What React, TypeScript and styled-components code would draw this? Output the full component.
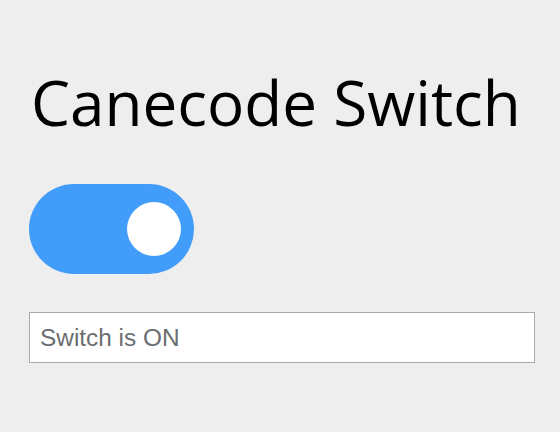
import React, { useState } from "react";
import styled, { createGlobalStyle } from "styled-components";

const Global = createGlobalStyle`
  html, body { margin: 0; padding: 0; background: #eeeeee; }
  body { font-family: "Open Sans", sans-serif; }
`;

const Page = styled.div`
  display: flex;
  flex-direction: column;
  align-items: flex-start;
  padding: 60px 25px 0 29px;
`;

const Title = styled.h1`
  margin: 0 0 0 2px;
  font-family: "Open Sans", sans-serif;
  font-weight: 400;
  font-size: 62px;
  line-height: normal;
  white-space: nowrap;
  color: #000;
`;

const Track = styled.button<{ $on: boolean }>`
  margin-top: 40px;
  width: 165px;
  height: 90px;
  border: none;
  padding: 0 13px;
  border-radius: 45px;
  background: ${(p) => (p.$on ? "#419cfa" : "#ccc")};
  display: flex;
  align-items: center;
  justify-content: ${(p) => (p.$on ? "flex-end" : "flex-start")};
  cursor: pointer;
`;

const Knob = styled.span`
  width: 54px;
  height: 54px;
  border-radius: 50%;
  background: #fff;
`;

const Status = styled.input`
  margin-top: 38px;
  box-sizing: border-box;
  width: 506px;
  height: 51px;
  padding: 0 10px;
  border: 1px solid #a9a9a9;
  background: #fff;
  font-family: "Liberation Sans", Arial, sans-serif;
  font-size: 24.4px;
  color: #6b6d70;
  outline: none;
`;

export default function App() {
  const [on, setOn] = useState(true);
  return (
    <>
      <Global />
      <Page>
        <Title>Canecode Switch</Title>
        <Track $on={on} onClick={() => setOn(!on)} aria-label="toggle">
          <Knob />
        </Track>
        <Status readOnly value={on ? "Switch is ON" : "Switch is OFF"} />
      </Page>
    </>
  );
}
